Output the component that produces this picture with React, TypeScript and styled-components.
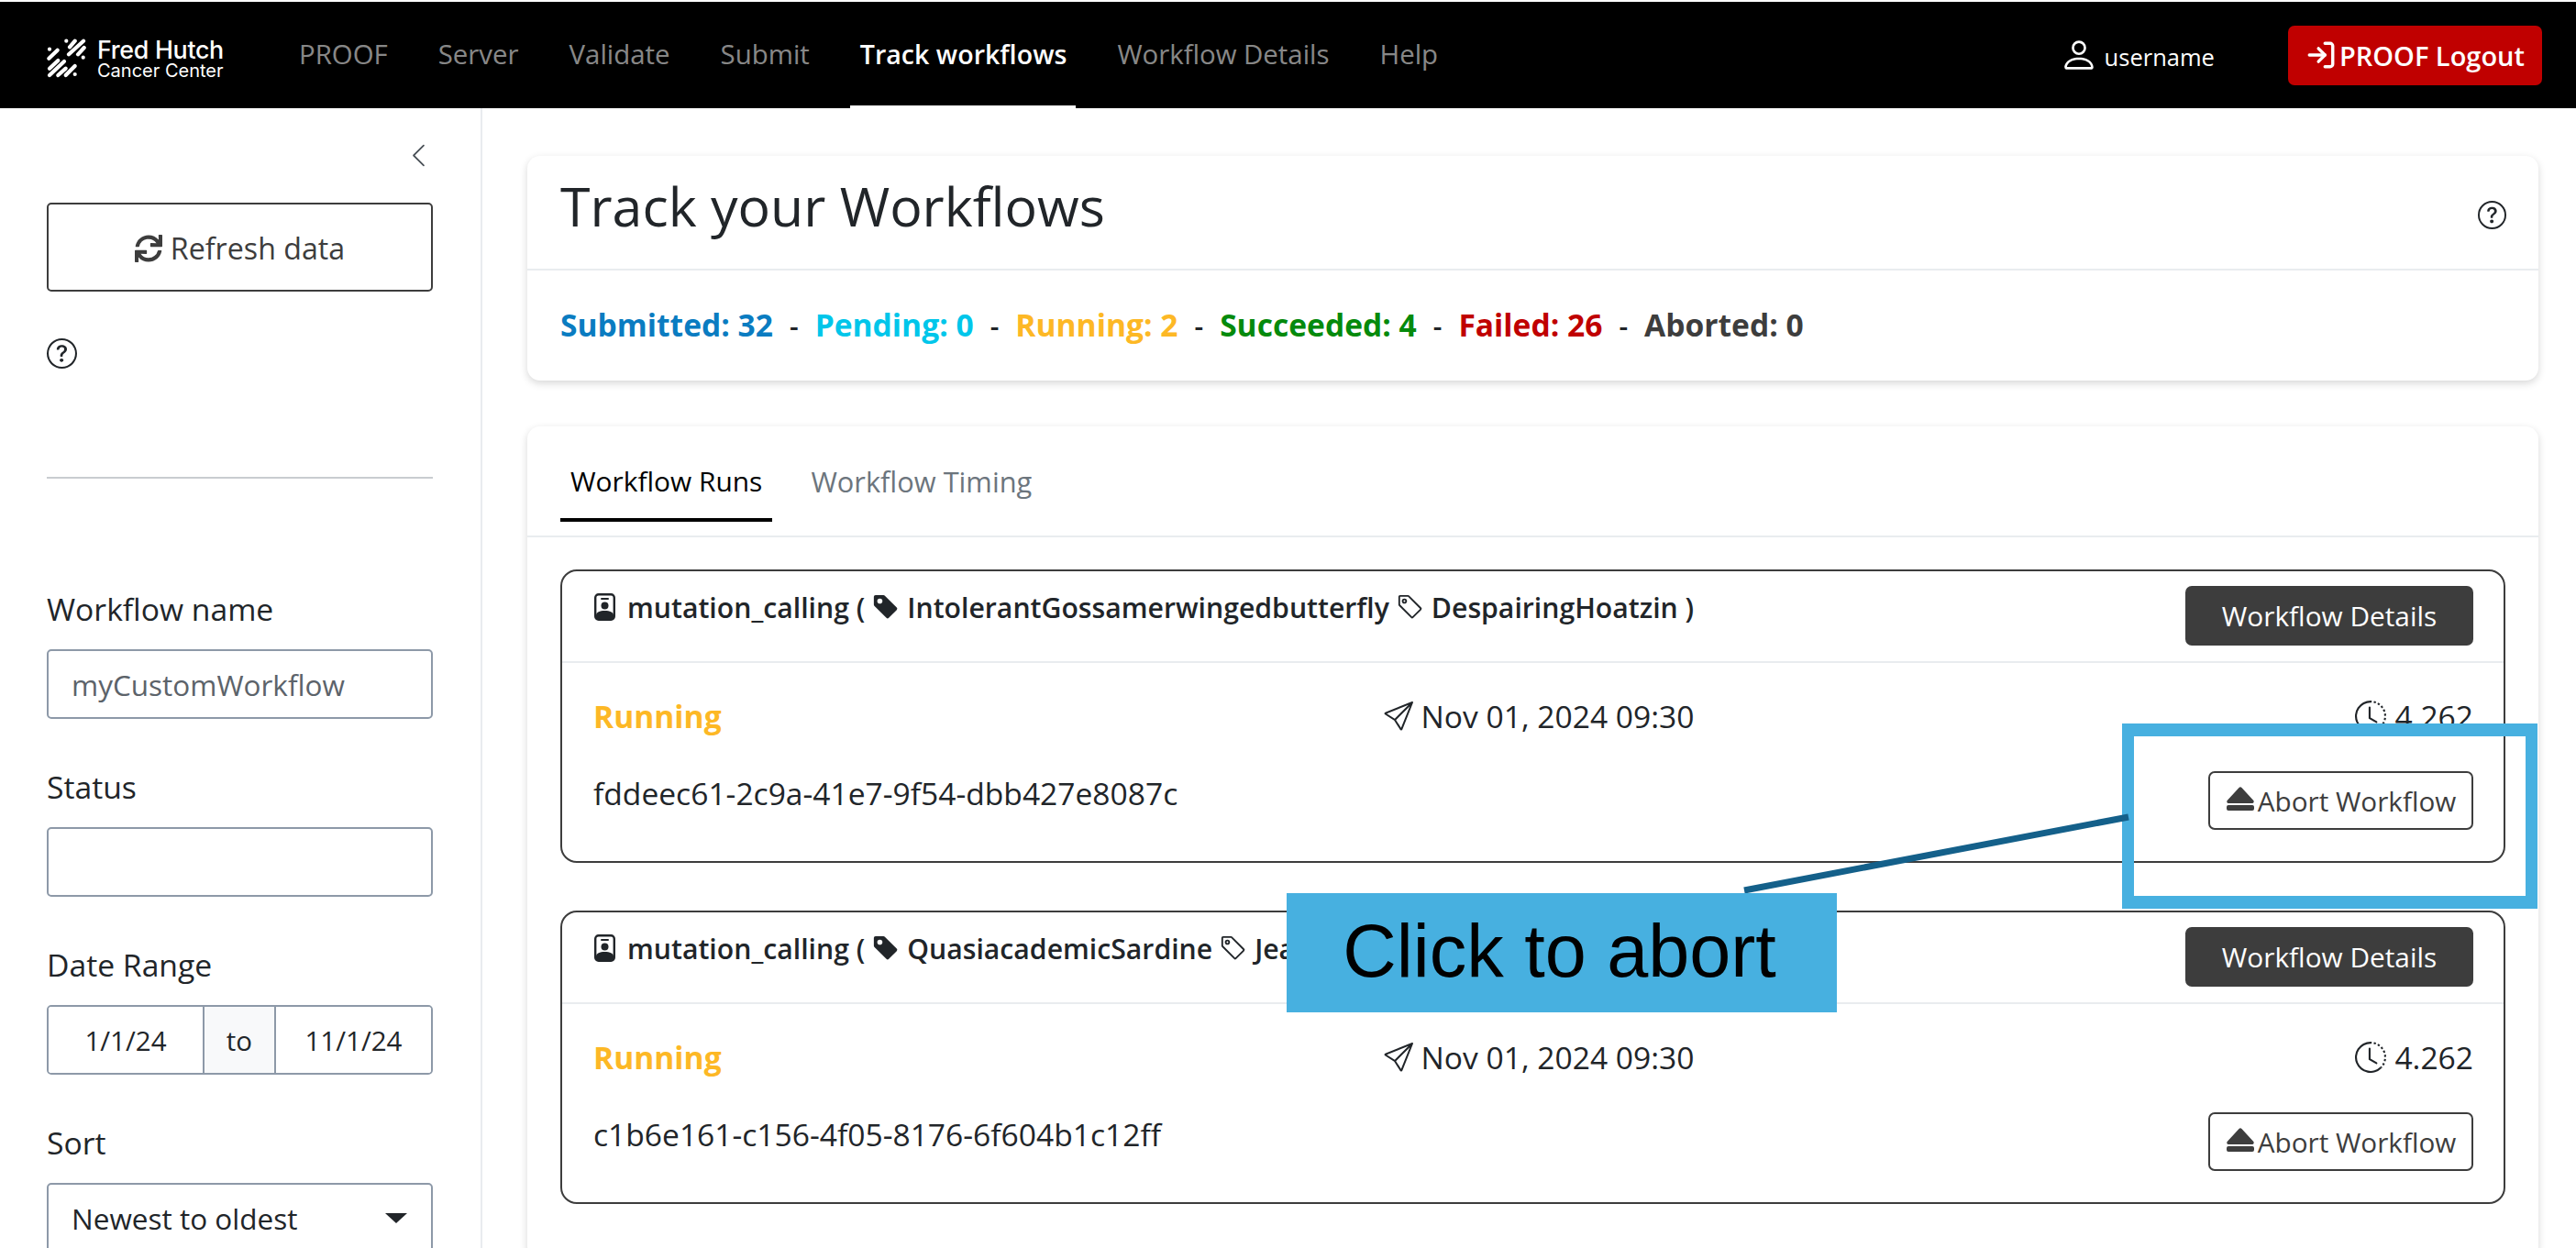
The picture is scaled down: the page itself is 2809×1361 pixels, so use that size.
import styled, { createGlobalStyle } from 'styled-components';
import {
  BsChevronLeft,
  BsClockHistory,
  BsEjectFill,
  BsPerson,
  BsQuestionCircle,
  BsSend,
  BsTag,
  BsTagFill,
} from 'react-icons/bs';
import { FaSync } from 'react-icons/fa';
import { LogIn } from 'lucide-react';

const GlobalStyle = createGlobalStyle`
  html, body {
    margin: 0;
    background: #fff;
  }
  body {
    font-family: "Open Sans", "Liberation Sans", sans-serif;
    font-size: 28.6px;
    color: #212529;
  }
  * {
    box-sizing: border-box;
  }
`;

const Page = styled.div`
  position: relative;
  width: 2809px;
  height: 1361px;
  overflow: hidden;
  padding-top: 2px;
`;

const Header = styled.header`
  display: flex;
  align-items: center;
  height: 116px;
  background: #000;
  padding: 0 37px 0 50px;
`;

const Logo = styled.div`
  display: flex;
  align-items: center;
  gap: 12px;
  width: 276px;
  padding-top: 8px;
  flex-shrink: 0;
  color: #fff;
  font-family: Inter, "Liberation Sans", sans-serif;
`;

const LogoText = styled.div`
  display: flex;
  flex-direction: column;
  line-height: 1;
  & b {
    font-size: 26.8px;
    font-weight: 500;
    letter-spacing: -0.3px;
  }
  & span {
    font-size: 20px;
    font-weight: 400;
  }
`;

const Nav = styled.nav`
  display: flex;
  align-self: stretch;
  gap: 55px;
`;

const NavLink = styled.a<{ $active?: boolean }>`
  display: flex;
  align-items: center;
  position: relative;
  padding-bottom: 3px;
  color: ${(p) => (p.$active ? '#fff' : 'rgba(255, 255, 255, 0.55)')};
  font-size: ${(p) => (p.$active ? '28.6px' : '29.4px')};
  font-weight: ${(p) => (p.$active ? 600 : 400)};
  &::after {
    content: '';
    display: ${(p) => (p.$active ? 'block' : 'none')};
    position: absolute;
    left: -11px;
    right: -10px;
    bottom: -2px;
    height: 5px;
    background: #fff;
  }
`;

const UserArea = styled.div`
  display: flex;
  align-items: center;
  margin-left: auto;
`;

const UserName = styled.div`
  display: flex;
  align-items: center;
  gap: 7px;
  color: #fff;
  font-size: 25.5px;
  margin-right: 80px;
  & span {
    padding-top: 3px;
  }
`;

const LogoutButton = styled.button`
  display: flex;
  align-items: center;
  gap: 3px;
  height: 65px;
  padding: 0 19px;
  background: #c00000;
  color: #fff;
  border: none;
  border-radius: 7px;
  font-family: inherit;
  font-size: 29px;
  font-weight: 600;
`;

const Body = styled.div`
  display: flex;
  height: 1243px;
`;

const Sidebar = styled.aside`
  width: 526px;
  flex-shrink: 0;
  padding: 0 52px 0 51px;
  border-right: 2px solid #e9ecef;
`;

const CollapseRow = styled.div`
  display: flex;
  justify-content: flex-end;
  align-items: center;
  height: 103px;
  padding-right: 1px;
  color: #495057;
  font-size: 29px;
`;

const RefreshButton = styled.button`
  display: flex;
  align-items: center;
  justify-content: center;
  gap: 9px;
  width: 100%;
  height: 97px;
  padding: 2px 0 0;
  background: #fff;
  border: 2px solid #3d3d3d;
  border-radius: 5px;
  color: #3d3d3d;
  font-family: inherit;
  font-size: 32.2px;
  font-weight: 500;
`;

const HelpRow = styled.div`
  display: flex;
  margin-top: 51px;
  height: 35px;
  font-size: 33px;
  color: #212529;
`;

const Rule = styled.hr`
  margin: 116px 0 0;
  border: none;
  border-top: 2px solid #c9ccd0;
`;

const Fields = styled.div`
  display: flex;
  flex-direction: column;
  gap: 54px;
  margin-top: 122px;
`;

const Field = styled.div`
  display: flex;
  flex-direction: column;
  gap: 24px;
`;

const Label = styled.label`
  font-size: 33.7px;
  line-height: 40px;
`;

const Input = styled.div<{ $muted?: boolean }>`
  display: flex;
  align-items: center;
  justify-content: space-between;
  height: 76px;
  padding: 0 26px 0 25px;
  border: 2px solid #8d99a8;
  border-radius: 5px;
  background: #fff;
  color: ${(p) => (p.$muted ? '#5c636a' : '#212529')};
  font-size: 31.5px;
`;

const DateGroup = styled.div`
  display: grid;
  grid-template-columns: 168px 80px 1fr;
  height: 76px;
  border: 2px solid #8d99a8;
  border-radius: 5px;
  overflow: hidden;
  font-size: 29.5px;
`;

const DateCell = styled.div<{ $addon?: boolean }>`
  display: flex;
  align-items: center;
  justify-content: center;
  background: ${(p) => (p.$addon ? '#f8f9fa' : '#fff')};
  border-left: ${(p) => (p.$addon ? '2px solid #8d99a8' : 'none')};
  border-right: ${(p) => (p.$addon ? '2px solid #8d99a8' : 'none')};
`;

const Caret = styled.span`
  width: 0;
  height: 0;
  border-left: 12px solid transparent;
  border-right: 12px solid transparent;
  border-top: 11px solid #212529;
`;

const Main = styled.main`
  flex: 1;
  min-width: 0;
  display: flex;
  flex-direction: column;
  gap: 50px;
  padding: 52px 41px 0 49px;
`;

const Card = styled.section`
  background: #fff;
  border-radius: 14px;
  box-shadow: 0 3px 8px rgba(0, 0, 0, 0.16);
`;

const CardHead = styled.div`
  display: flex;
  align-items: center;
  justify-content: space-between;
  height: 125px;
  padding: 0 35px 0 36px;
  border-bottom: 2px solid #e9ecef;
  & h1 {
    margin: 0;
    font-size: 59px;
    font-weight: 400;
    line-height: 1;
    padding-bottom: 14px;
  }
  & svg {
    font-size: 31px;
    margin-top: 6px;
  }
`;

const Stats = styled.div`
  display: flex;
  align-items: center;
  height: 120px;
  padding: 0 36px 3px;
  font-size: 33.6px;
  font-weight: 700;
  white-space: pre;
`;

const Stat = styled.span<{ $color: string }>`
  color: ${(p) => p.$color};
`;

const Dash = styled.span`
  font-weight: 600;
  font-size: 30px;
  margin: 0 18px;
  color: #212529;
`;

const Tabs = styled.div`
  display: flex;
  height: 121px;
  padding: 33px 36px 0;
  border-bottom: 2px solid #e9ecef;
  gap: 31px;
`;

const Tab = styled.div<{ $active?: boolean }>`
  display: flex;
  align-items: center;
  height: 71px;
  padding: 0 11px 14px;
  font-size: ${(p) => (p.$active ? '29.9px' : '30.8px')};
  font-weight: 500;
  color: ${(p) => (p.$active ? '#000' : '#6c757d')};
  border-bottom: ${(p) => (p.$active ? '4px solid #000' : '4px solid transparent')};
`;

const RunList = styled.div`
  display: flex;
  flex-direction: column;
  gap: 52px;
  padding: 35px 36px 60px;
`;

const Run = styled.article`
  border: 2px solid #3d3d3d;
  border-radius: 18px;
  height: 320px;
`;

const RunHead = styled.div`
  display: flex;
  justify-content: space-between;
  height: 100px;
  padding: 16px 33px 0 35px;
  border-bottom: 2px solid #e9ecef;
`;

const RunTitle = styled.div`
  display: flex;
  align-items: center;
  gap: 8px;
  height: 46px;
  font-weight: 600;
  font-size: 30.2px;
  white-space: nowrap;
  & svg {
    font-size: 30px;
    flex-shrink: 0;
  }
`;

const BadgeSvg = styled.svg`
  margin-right: 5px;
`;

const DetailsButton = styled.button`
  width: 314px;
  height: 65px;
  background: #3d3d3d;
  border: none;
  border-radius: 7px;
  color: #fff;
  font-family: inherit;
  font-size: 29.8px;
  font-weight: 500;
  flex-shrink: 0;
`;

const RunBody = styled.div`
  display: grid;
  grid-template-columns: 1fr auto 1fr;
  padding: 0 33px 0 34px;
`;

const Status = styled.div`
  display: flex;
  align-items: center;
  height: 116px;
  color: #fdb825;
  font-size: 33.6px;
  font-weight: 700;
`;

const MetaText = styled.div<{ $end?: boolean }>`
  display: flex;
  align-items: center;
  justify-content: ${(p) => (p.$end ? 'flex-end' : 'flex-start')};
  gap: 9px;
  height: 116px;
  font-size: 33.6px;
  color: #212529;
`;

const DateMeta = styled(MetaText)`
  padding-left: 12px;
`;

const RunId = styled.div`
  grid-column: span 2;
  font-size: 33.6px;
  line-height: 40px;
  margin-top: 6px;
`;

const AbortCell = styled.div`
  display: flex;
  justify-content: flex-end;
`;

const AbortButton = styled.button`
  display: flex;
  align-items: center;
  justify-content: center;
  gap: 3px;
  width: 289px;
  height: 64px;
  margin-top: 2px;
  padding: 0;
  background: #fff;
  border: 2px solid #3d3d3d;
  border-radius: 7px;
  color: #3d3d3d;
  font-family: inherit;
  font-size: 29.7px;
  font-weight: 500;
`;

const Highlight = styled.div`
  position: absolute;
  left: 2314px;
  top: 789px;
  width: 453px;
  height: 202px;
  border: solid #47b0e0;
  border-width: 14px 13px;
`;

const Leader = styled.svg`
  position: absolute;
  left: 1895px;
  top: 880px;
`;

const Callout = styled.div`
  position: absolute;
  left: 1403px;
  top: 974px;
  width: 600px;
  height: 130px;
  padding: 0 5px 4px 0;
  display: flex;
  align-items: center;
  justify-content: center;
  background: #47b0e0;
  color: #000;
  font-family: "Liberation Sans", Arial, sans-serif;
  font-size: 81px;
`;

const runs = [
  {
    tagA: 'IntolerantGossamerwingedbutterfly',
    tagB: 'DespairingHoatzin',
    id: 'fddeec61-2c9a-41e7-9f54-dbb427e8087c',
  },
  {
    tagA: 'QuasiacademicSardine',
    tagB: 'JealousSpringpeeper',
    id: 'c1b6e161-c156-4f05-8176-6f604b1c12ff',
  },
];

const navItems = ['PROOF', 'Server', 'Validate', 'Submit', 'Track workflows', 'Workflow Details', 'Help'];

const stats = [
  { label: 'Submitted: 32', color: '#0a7cc1' },
  { label: 'Pending: 0', color: '#00c6ea' },
  { label: 'Running: 2', color: '#fdb825' },
  { label: 'Succeeded: 4', color: '#058a0c' },
  { label: 'Failed: 26', color: '#c00000' },
  { label: 'Aborted: 0', color: '#3d3d3d' },
];

const LogoMark = () => (
  <svg width="44" height="43" viewBox="0 0 44 43" stroke="#fff" strokeWidth="4.2" strokeLinecap="round">
    <path d="M22.3 2.7h.01M26 9.3l5.7-6.6M25 17.3L41 2.7M35 17.3l6.7-7.3M40.7 20.7h.01" />
    <path d="M4 11.7h.01M3.3 21.7l9.4-9" />
    <path d="M4 32.7L13.3 24M4 40l16-15M13.3 40l8.4-7.3M21.7 40l10-10M31.7 39h.01" />
  </svg>
);

const BadgeIcon = () => (
  <BadgeSvg width="23" height="30" viewBox="0 0 23 30">
    <rect x="1.2" y="1.2" width="20.6" height="27.6" rx="3.5" fill="none" stroke="currentColor" strokeWidth="2.4" />
    <path d="M8 6h7" stroke="currentColor" strokeWidth="2" strokeLinecap="round" />
    <circle cx="11.5" cy="13.5" r="4" fill="currentColor" />
    <path d="M2 28v-4c0-3.5 4-5 9.500-5s9.500 1.500 9.500 5v4z" fill="currentColor" />
  </BadgeSvg>
);

const App = () => {
  return (
    <Page>
      <GlobalStyle />
      <Header>
        <Logo>
          <LogoMark />
          <LogoText>
            <b>Fred Hutch</b>
            <span>Cancer Center</span>
          </LogoText>
        </Logo>
        <Nav>
          {navItems.map((item) => (
            <NavLink key={item} $active={item === 'Track workflows'}>
              {item}
            </NavLink>
          ))}
        </Nav>
        <UserArea>
          <UserName>
            <BsPerson size={42} />
            <span>username</span>
          </UserName>
          <LogoutButton>
            <LogIn size={34} strokeWidth={2.4} />
            PROOF Logout
          </LogoutButton>
        </UserArea>
      </Header>
      <Body>
        <Sidebar>
          <CollapseRow>
            <BsChevronLeft />
          </CollapseRow>
          <RefreshButton>
            <FaSync size={30} />
            Refresh data
          </RefreshButton>
          <HelpRow>
            <BsQuestionCircle />
          </HelpRow>
          <Rule />
          <Fields>
            <Field>
              <Label>Workflow name</Label>
              <Input $muted>myCustomWorkflow</Input>
            </Field>
            <Field>
              <Label>Status</Label>
              <Input />
            </Field>
            <Field>
              <Label>Date Range</Label>
              <DateGroup>
                <DateCell>1/1/24</DateCell>
                <DateCell $addon>to</DateCell>
                <DateCell>11/1/24</DateCell>
              </DateGroup>
            </Field>
            <Field>
              <Label>Sort</Label>
              <Input>
                Newest to oldest
                <Caret />
              </Input>
            </Field>
          </Fields>
        </Sidebar>
        <Main>
          <Card>
            <CardHead>
              <h1>Track your Workflows</h1>
              <BsQuestionCircle />
            </CardHead>
            <Stats>
              {stats.map((s, i) => (
                <span key={s.label}>
                  {i > 0 && <Dash>-</Dash>}
                  <Stat $color={s.color}>{s.label}</Stat>
                </span>
              ))}
            </Stats>
          </Card>
          <Card>
            <Tabs>
              <Tab $active>Workflow Runs</Tab>
              <Tab>Workflow Timing</Tab>
            </Tabs>
            <RunList>
              {runs.map((run) => (
                <Run key={run.id}>
                  <RunHead>
                    <RunTitle>
                      <BadgeIcon />
                      mutation_calling (
                      <BsTagFill />
                      {run.tagA}
                      <BsTag />
                      {run.tagB} )
                    </RunTitle>
                    <DetailsButton>Workflow Details</DetailsButton>
                  </RunHead>
                  <RunBody>
                    <Status>Running</Status>
                    <DateMeta>
                      <BsSend size={32} />
                      Nov 01, 2024 09:30
                    </DateMeta>
                    <MetaText $end>
                      <BsClockHistory size={34} />
                      4.262
                    </MetaText>
                    <RunId>{run.id}</RunId>
                    <AbortCell>
                      <AbortButton>
                        <BsEjectFill size={32} />
                        Abort Workflow
                      </AbortButton>
                    </AbortCell>
                  </RunBody>
                </Run>
              ))}
            </RunList>
          </Card>
        </Main>
      </Body>
      <Highlight />
      <Leader width="440" height="100" viewBox="0 0 440 100">
        <line x1="426" y1="11" x2="7" y2="91" stroke="#14608a" strokeWidth="7" />
      </Leader>
      <Callout>Click to abort</Callout>
    </Page>
  );
};

export default App;
